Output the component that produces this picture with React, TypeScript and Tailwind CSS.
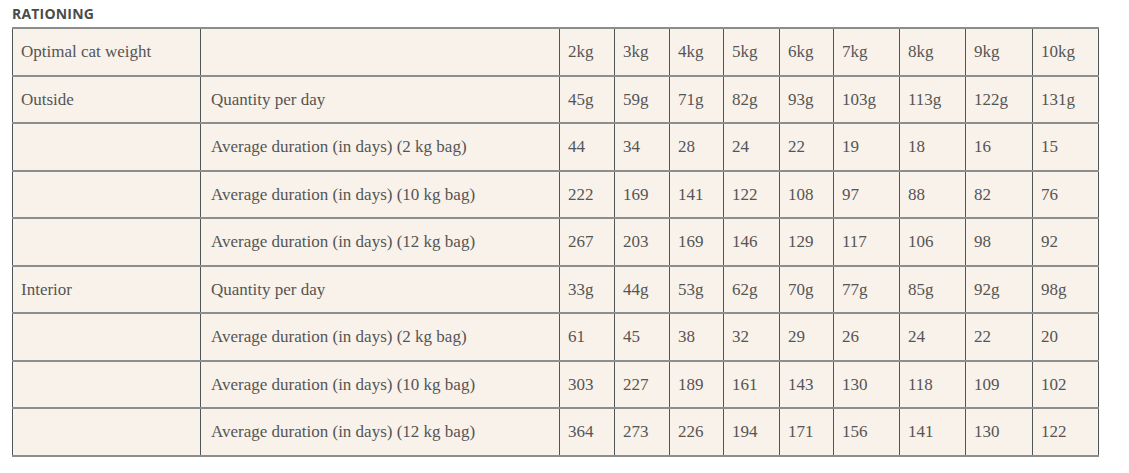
const weights = ["2kg", "3kg", "4kg", "5kg", "6kg", "7kg", "8kg", "9kg", "10kg"];

const rows: [string, string, string[]][] = [
  ["Outside", "Quantity per day", ["45g", "59g", "71g", "82g", "93g", "103g", "113g", "122g", "131g"]],
  ["", "Average duration (in days) (2 kg bag)", ["44", "34", "28", "24", "22", "19", "18", "16", "15"]],
  ["", "Average duration (in days) (10 kg bag)", ["222", "169", "141", "122", "108", "97", "88", "82", "76"]],
  ["", "Average duration (in days) (12 kg bag)", ["267", "203", "169", "146", "129", "117", "106", "98", "92"]],
  ["Interior", "Quantity per day", ["33g", "44g", "53g", "62g", "70g", "77g", "85g", "92g", "98g"]],
  ["", "Average duration (in days) (2 kg bag)", ["61", "45", "38", "32", "29", "26", "24", "22", "20"]],
  ["", "Average duration (in days) (10 kg bag)", ["303", "227", "189", "161", "143", "130", "118", "109", "102"]],
  ["", "Average duration (in days) (12 kg bag)", ["364", "273", "226", "194", "171", "156", "141", "130", "122"]],
];

const colWidths = [188, 359, 55, 55, 54, 56, 54, 66, 66, 67, 66];

const cell =
  "border-x border-x-[#4f5659] border-y-2 border-y-[#8c8e8e] px-2 align-middle text-left font-normal";

export default function App() {
  return (
    <div className="min-h-[473px] w-[1129px] bg-white pl-3 pt-[5px]">
      <h3 className="font-['Open_Sans',sans-serif] text-[14px] font-bold leading-[17px] tracking-[0.2px] text-[#4b4b4b]">
        RATIONING
      </h3>

      <table className="mt-[5px] w-[1087px] table-fixed border-collapse bg-[#f9f2ea] font-['Liberation_Serif',serif] text-[17px] text-[#555555]">
        <colgroup>
          {colWidths.map((w, i) => (
            <col key={i} style={{ width: w }} />
          ))}
        </colgroup>
        <tbody>
          <tr className="h-[47.5px]">
            <td className={cell}>Optimal cat weight</td>
            <td className={cell}></td>
            {weights.map((w) => (
              <td key={w} className={cell}>
                {w}
              </td>
            ))}
          </tr>
          {rows.map(([group, label, values], i) => (
            <tr key={i} className="h-[47.5px]">
              <td className={cell}>{group}</td>
              <td className={cell + " pl-[10px]"}>{label}</td>
              {values.map((v, j) => (
                <td key={j} className={cell}>
                  {v}
                </td>
              ))}
            </tr>
          ))}
        </tbody>
      </table>
    </div>
  );
}
